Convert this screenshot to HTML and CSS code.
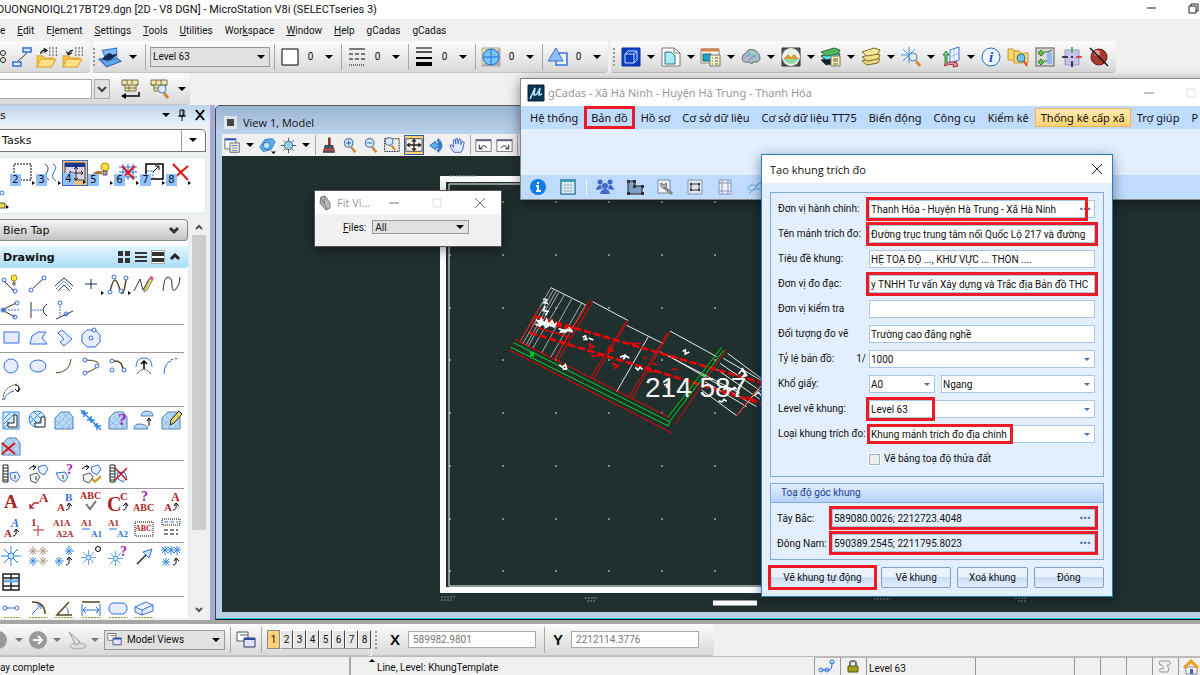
FILE: index.html
```
<!DOCTYPE html>
<html lang="vi">
<head>
  <meta charset="UTF-8" />
  <meta name="viewport" content="width=device-width, initial-scale=1" />
  <title>MicroStation V8i - gCadas</title>
  <link rel="stylesheet" href="styles.css">
</head>
<body>

  <!-- shared icons -->
  <svg class="sprite" aria-hidden="true">
    <symbol id="star" viewBox="0 0 20 20"><path d="M10 0v20M0 10h20M3 3l14 14M17 3L3 17" stroke="#2f86e0" /><circle cx="10" cy="10" r="3" fill="#cfe6ff" stroke="#2f86e0" /></symbol>
    <symbol id="lens" viewBox="0 0 20 20"><path d="M12 12l5 6" stroke="#d08a3c" stroke-width="3" /><circle cx="9" cy="7" r="5" fill="#d4ecff" stroke="#5a7fa8" stroke-width="1.5" /></symbol>
    <symbol id="folder" viewBox="0 0 20 20"><path d="M1 19V9h5l2 2h8v2" fill="#f6c64c" stroke="#e0aa30" /><path d="M1 19l3-7h14l-4 7z" fill="#ffe08a" stroke="#e0aa30" /><path d="M12 2h1m2 0h1m2 0h1M12 5h1m2 0h1m2 0h1M12 8h1m2 0h1m2 0h1" stroke="#666" stroke-width="2" /></symbol>
    <symbol id="hatch" viewBox="0 0 20 20"><path d="M1 19V8l6-6h8l4 5v12z" fill="#b7d8f7" stroke="#4e7fae" /><path d="M2 10l9 9M5 6l13 13M9 3l9 9M2 16L15 3M6 19L18 7M12 19l6-6" stroke="#8fbdec" /></symbol>
    <symbol id="views" viewBox="0 0 20 20"><path d="M1 2h11v9H1zM4 5h8" fill="#fff" stroke="#556" /><path d="M8 8h11v9H8z" fill="#dfe3ff" stroke="#335" /><path d="M8 9h11" stroke="#2c4c9c" stroke-width="2" /></symbol>
    <symbol id="chev" viewBox="0 0 12 12"><path d="M2 4l4 4 4-4" stroke="#444" stroke-width="2" /></symbol>
  </svg>

  <div class="app">
    <header class="titlebar">
      <span class="titlebar-text">DUONGNOIQL217BT29.dgn [2D - V8 DGN] - MicroStation V8i (SELECTseries 3)</span>
      <button class="win-btn" aria-label="Minimize"><svg class="ico" viewBox="0 0 20 20"><path d="M5 8h9" stroke="#222" /></svg></button>
      <button class="win-btn" aria-label="Restore"><svg class="ico" viewBox="0 0 20 20"><path d="M5 6h7v7H5zM7 6V4h7v7h-2" stroke="#222" /></svg></button>
    </header>

    <nav class="menubar">
      <a href="#">e</a>
      <a href="#"><u>E</u>dit</a>
      <a href="#">E<u>l</u>ement</a>
      <a href="#"><u>S</u>ettings</a>
      <a href="#"><u>T</u>ools</a>
      <a href="#"><u>U</u>tilities</a>
      <a href="#">Wor<u>k</u>space</a>
      <a href="#"><u>W</u>indow</a>
      <a href="#"><u>H</u>elp</a>
      <a href="#">gCadas</a>
      <a href="#">gCadas</a>
    </nav>

    <!-- attribute and primary tools -->
    <div class="toolrow">
      <div class="toolgroup file-tools">
        <svg class="ico narrow" viewBox="0 0 8 20"><circle cx="3" cy="6" r="2.5" stroke="#222" /><circle cx="3" cy="13" r="2.5" stroke="#222" /></svg>
        <svg class="ico" viewBox="0 0 20 20"><path d="M11 1h8v4h-8zM1 15h8v4H1z" fill="#e6edff" stroke="#2f6fe0" stroke-width="1.5" /><path d="M6 14l9-8" stroke="#333" /></svg>
        <svg class="ico big" viewBox="0 0 20 20"><use href="#folder" /><path d="M4 7q2-4 5-3M7 2l3 2-3 2" stroke="#000" /></svg>
        <svg class="ico big" viewBox="0 0 20 20"><use href="#folder" /><path d="M10 4q-3 0-4 3M4 5l2 3 3-2" stroke="#000" /></svg>
      </div>
      <div class="toolgroup attr-tools">
        <i class="grip"></i>
        <svg class="ico big" viewBox="0 0 20 20"><path d="M0 12l7 7 13-5-7-5z" fill="#5fa4ec" stroke="#2a66b8" /><path d="M3 4l13-2v9l-9 3z" fill="#7dbcf7" stroke="#3d7ed0" /><path d="M3 12q6-8 9-4l5-1-4 4q-5 4-10 1z" fill="#132a52" stroke="none" /></svg>
        <i class="caret"></i>
        <i class="sep"></i>
        <select class="field level" aria-label="Active level"><option>Level 63</option></select>
        <div class="attr"><svg class="ico" viewBox="0 0 20 20"><path d="M2 2h16v16H2z" fill="#fff" stroke="#000" /></svg><span>0</span><i class="caret"></i></div>
        <div class="attr"><svg class="ico" viewBox="0 0 20 20"><path d="M2 2h16" stroke="#000" /><path d="M2 7h16M2 12h16" stroke="#000" stroke-dasharray="4 2" /><path d="M2 18h16" stroke="#000" stroke-dasharray="1 1" /></svg><span>0</span><i class="caret"></i></div>
        <div class="attr"><svg class="ico" viewBox="0 0 20 20"><path d="M2 1h16" stroke="#000" /><path d="M2 5h16" stroke="#555" stroke-width="2" /><path d="M2 11h16" stroke="#000" stroke-width="2" /><path d="M2 17h16" stroke="#000" stroke-width="4" /></svg><span>0</span><i class="caret"></i></div>
        <div class="attr"><svg class="ico" viewBox="0 0 20 20"><path d="M1 1h18v18H1z" fill="#ecdf9a" stroke="#aaa" /><path d="M1 19L19 1v18z" fill="#aaa" stroke="none" /><circle cx="10" cy="10" r="8" fill="#79c3fb" stroke="#1f6fd0" /><path d="M10 2v16M2 10h16" stroke="#1f6fd0" /></svg><span>0</span><i class="caret"></i></div>
        <div class="attr"><svg class="ico" viewBox="0 0 20 20"><path d="M8 6h11v12H8z" fill="#eef3ff" stroke="#3a72d8" stroke-width="1.5" /><path d="M0 14L8 1l7 13z" fill="#8fc0f5" stroke="#3a72d8" /></svg><span>0</span><i class="caret"></i></div>
      </div>
      <div class="toolgroup main-tools">
        <i class="grip"></i>
        <div class="pair"><svg class="ico" viewBox="0 0 20 20"><path d="M1 1h18v18H1z" fill="#0a3fc4" stroke="#0a2f9c" /><path d="M4 7h9v9H4zM4 7l3-3h9v9l-3 3M13 7l3-3" stroke="#cfe0ff" /></svg><i class="caret"></i></div>
        <div class="pair"><svg class="ico" viewBox="0 0 20 20"><path d="M1 1h12l6 5v13H1z" fill="#fff" stroke="#777" /><path d="M4 5h6l4 4v8H4z" fill="#a9ecf2" stroke="#28708a" /><path d="M13 1v5h6" stroke="#777" /></svg><i class="caret"></i></div>
        <div class="pair"><svg class="ico" viewBox="0 0 20 20"><path d="M0 2h18v14H0z" fill="#f6f6ee" stroke="#888" /><path d="M0 3h18" stroke="#d8824a" stroke-width="3" /><path d="M2 7h8v7H2z" fill="#19a2d8" stroke="#1c6a4a" /><path d="M9 8h10v11H9z" fill="#fff3b0" stroke="#777" /><path d="M11 11h1m2 0h3M11 14h1m2 0h3M11 17h1m2 0h3" stroke="#2a58c8" /></svg><i class="caret"></i></div>
        <div class="pair"><svg class="ico" viewBox="0 0 20 20"><path d="M1 12q0-5 4-6 2-5 8-3 6 2 6 9-1 4-7 3l-1 2-3-2q-6 1-7-3z" fill="#a8bfc6" stroke="#65747c" /><path d="M5 12q0-5 5-5M8 13q3-5 7-4M8 6q4-1 5 3" stroke="#6d8ae0" /><circle cx="11" cy="6" r="2" fill="#9fdca4" stroke="none" /><circle cx="6" cy="12" r="2" fill="#e3a5c6" stroke="none" /></svg><i class="caret"></i></div>
        <div class="pair"><svg class="ico" viewBox="0 0 20 20"><path d="M1 1h18v18H1z" fill="#555" stroke="#333" /><circle cx="10" cy="10" r="9" fill="#e9f3ea" stroke="none" /><path d="M2 12l5-5 3 3 3-3 5 5z" fill="#d89c3a" stroke="none" /><path d="M2 12h16q-8 10-16 0z" fill="#8fd8a4" stroke="none" /></svg><i class="caret"></i></div>
        <div class="pair"><svg class="ico" viewBox="0 0 20 20"><path d="M0 13l5 5 12-2 2-4-6-3z" fill="#123" stroke="#444" /><path d="M0 9l5 4 12-2 2-4-6-2z" fill="#4fe0f0" stroke="#333" /><path d="M0 5l5 4 12-2 2-4-6-2z" fill="#55b562" stroke="#2c6e38" /><path d="M10 9h9v10h-9z" fill="#fff3b0" stroke="#777" /><path d="M12 12h5M12 14h5M12 17h5" stroke="#555" /></svg><i class="caret"></i></div>
        <div class="pair"><svg class="ico" viewBox="0 0 20 20"><path d="M1 14l5 4 11-2 2-4-6-2z" fill="#ecd884" stroke="#7d6d20" /><path d="M1 10l5 4 11-2 2-4-6-2z" fill="#f2e08e" stroke="#7d6d20" /><path d="M1 5l5 4 11-2 2-4-6-2z" fill="#fae99c" stroke="#7d6d20" /></svg><i class="caret"></i></div>
        <div class="pair"><svg class="ico" viewBox="0 0 20 20"><path d="M8 0v16M0 8h16M2 2l12 12M14 2L2 14" stroke="#3f95e8" /><path d="M15 14l4 5" stroke="#d08a3c" stroke-width="3" /><circle cx="12" cy="10" r="4" fill="#dff0ff" stroke="#5a7fa8" /></svg><i class="caret"></i></div>
        <div class="pair"><svg class="ico" viewBox="0 0 20 20"><path d="M9 3l9-3v13l-9 3z" fill="#f3f7ff" stroke="#3a72d8" /><path d="M9 10l9-4M13 2v12" stroke="#9bbcf0" /><path d="M4 17V8H2l3-4 3 4H6v7" fill="#7fd08a" stroke="#2c7a38" /><path d="M3 18q6-5 11-2l1-2 2 5-5 1 1-2q-4-2-9 1z" fill="#e79aa6" stroke="#a22a3c" /></svg><i class="caret"></i></div>
        <svg class="ico" viewBox="0 0 20 20"><circle cx="10" cy="10" r="9" fill="#eef5ff" stroke="#2467d4" /><text x="8" y="15" font-family="Liberation Serif" font-size="15" font-style="italic" font-weight="bold" fill="#1d55c4" stroke="none">i</text></svg>
        <svg class="ico" viewBox="0 0 20 20"><path d="M0 2h5l1 2h5v9H0z" fill="#fbd86a" stroke="#c8942a" /><path d="M6 4h5l1 2h8v10H6z" fill="#fbd86a" stroke="#c8942a" /><path d="M16 14l3 5" stroke="#e0442a" stroke-width="2" /><circle cx="13" cy="11" r="4" fill="#6fc3ea" stroke="#2a6f9c" /></svg>
        <svg class="ico" viewBox="0 0 20 20"><path d="M1 1h18v18H1z" fill="#d8d8d0" stroke="#888" stroke-width="1.5" /><path d="M3 6l3-3 3 3-3 3zM3 15l3-3 3 3-3 3z" fill="#5cc04a" stroke="#2d7a20" /><path d="M9 5h3l5-2M9 14h3" stroke="#555" /><path d="M12 5h5v12h-5z" fill="#8fb8ec" stroke="none" /></svg>
        <svg class="ico" viewBox="0 0 20 20"><path d="M3 3h14v15H3z" fill="#c6c2ea" stroke="#9a96c4" /><path d="M10 14v6M0 10h6M9 10h2" stroke="#111" stroke-width="1.5" /><path d="M10 0v6" stroke="#22b03a" stroke-width="1.5" /><path d="M14 10h6" stroke="#d22" stroke-width="1.5" /></svg>
        <svg class="ico" viewBox="0 0 20 20"><circle cx="10" cy="10" r="8" fill="#a83a34" stroke="#6d1d1a" /><circle cx="8" cy="6" r="3" fill="#e3a39c" stroke="none" /><path d="M1 1l18 18" stroke="#111" stroke-width="1.5" /></svg>
      </div>
    </div>

    <div class="toolrow">
      <div class="toolgroup key-in">
        <input class="keyin-box" type="text" aria-label="Key-in">
        <button class="keyin-drop" aria-label="Key-in history"><svg viewBox="0 0 12 12"><use href="#chev" /></svg></button>
        <svg class="ico" viewBox="0 0 20 20"><path d="M2 1h16v5h-2v6H5V6H2z" fill="#efe6b0" stroke="#77704a" /><path d="M2 6h16M7 1v5M12 1v5M9 6v6M5 9h11" stroke="#77704a" /><path d="M19 13v4H4" stroke="#000" stroke-width="1.5" /><path d="M6 14l-5 3 5 3z" fill="#000" stroke="none" /></svg>
        <svg class="ico" viewBox="0 0 20 20"><path d="M1 1h16v5h-2v6H4V6H1z" fill="#efe6b0" stroke="#77704a" /><path d="M1 6h16M6 1v5M11 1v5M4 9h6" stroke="#77704a" /><path d="M14 14l4 5" stroke="#d08a3c" stroke-width="3" /><circle cx="12" cy="10" r="4" fill="#d4ecff" stroke="#5a7fa8" /></svg>
        <i class="caret"></i>
      </div>
    </div>

    <main class="workspace">

      <!-- task list -->
      <aside class="tasks">
        <div class="tasks-head">
          <span class="grow">s</span>
          <i class="caret"></i>
          <svg class="pin" viewBox="0 0 10 12"><path d="M3 1h4v6H3zM6 1v6M1 7h8M5 7v5" /></svg>
          <svg class="cross" viewBox="0 0 12 12"><path d="M2 1l8 10M10 1L2 11" /></svg>
        </div>
        <div class="tasks-pick">
          <select class="tasks-select" aria-label="Task"><option>Tasks</option></select>
        </div>
        <div class="quick">
          <div class="quick-row">
            <div class="quick-cell"><svg class="ico" viewBox="0 0 20 20"><path d="M1 2h17v16H1z" stroke="#000" stroke-dasharray="2 1" /></svg><b>2</b></div>
            <div class="quick-cell"><svg class="ico" viewBox="0 0 20 20"><path d="M6 2q5 3 2 8t2 8" stroke="#444" /><path d="M14 2q5 3 1 8t2 9" stroke="#2f6fe0" /></svg><b>3</b></div>
            <div class="quick-cell active"><svg class="ico" viewBox="0 0 20 20"><path d="M0 1h20v17H0z" fill="#d8d3e8" stroke="#445" /><path d="M0 3h20" stroke="#16388c" stroke-width="4" /><path d="M11 5v13M4 11h14M9 7l2-2 2 2M9 16l2 2 2-2M6 9l-2 2 2 2M16 9l2 2-2 2" stroke="#222" /></svg><b>4</b></div>
            <div class="quick-cell"><svg class="ico" viewBox="0 0 20 20"><path d="M2 15q2-6 9-4" stroke="#b0722a" stroke-width="3" /><circle cx="14" cy="5" r="4" fill="#ffe23c" stroke="#a88c10" /><path d="M12 9h4v4h-4z" fill="#aaa" stroke="#555" /></svg><b>5</b></div>
            <div class="quick-cell"><svg class="ico" viewBox="0 0 20 20"><path d="M6 2v16M11 2v16M16 2v16M2 5h18M2 10h18M2 15h18" stroke="#2f6fe0" /><path d="M5 4l12 13M18 4L4 17" stroke="#d81818" stroke-width="2" /></svg><b>6</b></div>
            <div class="quick-cell"><svg class="ico" viewBox="0 0 20 20"><path d="M3 2h17v15H3z" stroke="#000" stroke-width="1.5" /><path d="M4 9h6v8" stroke="#2f6fe0" stroke-dasharray="2 1" /><path d="M10 10l6-6M12 4h4v4" stroke="#000" /></svg><b>7</b></div>
            <div class="quick-cell"><svg class="ico" viewBox="0 0 20 20"><path d="M4 2l15 16M19 4L4 17" stroke="#d81818" stroke-width="2" /></svg><b>8</b></div>
          </div>
          <svg class="quick-rest" viewBox="0 0 12 24"><circle cx="2" cy="7" r="2" stroke="#2f6fe0" /><path d="M0 17h5v5H0" fill="#e6d94a" stroke="#555" /><path d="M6 19l3 2-3 2z" fill="#000" /></svg>
        </div>

        <div class="tasks-body">
          <div class="palette">
            <button class="task-tab">Bien Tap <svg viewBox="0 0 12 12"><path d="M2 4l4 4 4-4" stroke="#333" stroke-width="3" /></svg></button>
            <div class="task-tab open">
              <b class="grow">Drawing</b>
              <svg viewBox="0 0 12 12"><path d="M0 0h5v5H0zM7 0h5v5H7zM0 7h5v5H0zM7 7h5v5H7z" fill="#333" /></svg>
              <svg viewBox="0 0 12 12"><path d="M0 2h12M0 6h12M0 10h12" stroke="#333" stroke-width="2" /></svg>
              <svg class="picked" viewBox="0 0 12 12"><path d="M0 1h12v4H0zM0 7h12v4H0z" fill="#333" /></svg>
              <svg viewBox="0 0 12 12"><path d="M2 8l4-4 4 4" stroke="#222" stroke-width="3" /></svg>
            </div>
            <div class="icons">
              <svg class="ico" viewBox="0 0 20 20"><path d="M3 7l10 10" stroke="#333" /><circle cx="3" cy="6" r="2" /><circle cx="14" cy="17" r="2" /><circle cx="13" cy="4" r="3" fill="#ffe23c" stroke="#a88c10" /><path d="M12 8h2v3h-2z" fill="#999" stroke="#666" /></svg>
              <svg class="ico" viewBox="0 0 20 20"><path d="M5 14L15 5" stroke="#333" /><circle cx="3" cy="16" r="2" /><circle cx="16" cy="4" r="2" /></svg>
              <svg class="ico" viewBox="0 0 20 20"><path d="M1 12l9-8 9 8M4 17l6-6 6 6" stroke="#333" /><path d="M2 15l8-8 8 8" stroke="#2f6fe0" stroke-dasharray="2 1" /></svg>
              <svg class="ico" viewBox="0 0 20 20"><path d="M10 5v10M4 10h12" stroke="#333" /><circle cx="10" cy="10" r="1" /><path d="M20 17l3 2-3 2z" fill="#000" stroke="none" /></svg>
              <svg class="ico" viewBox="0 0 20 20"><path d="M2 17Q5 6 7 6t5 10 6-10" stroke="#5a4420" stroke-width="1.5" /><circle cx="2" cy="18" r="2" fill="#fff" /><circle cx="6" cy="3" r="2" fill="#fff" /><circle cx="13" cy="17" r="2" fill="#fff" /><circle cx="18" cy="4" r="2" fill="#fff" /><path d="M20 17l3 2-3 2z" fill="#000" stroke="none" /></svg>
              <svg class="ico" viewBox="0 0 20 20"><path d="M0 17L6 5l3 11 6-11" stroke="#333" /><path d="M10 16l6-12 3 1-6 11-3 2z" fill="#f5e34a" stroke="#777" /><path d="M16 3l3 2" stroke="#d4587a" stroke-width="3" /></svg>
              <svg class="ico" viewBox="0 0 20 20"><path d="M2 17Q3 3 7 3t4 8 4 4 4-12" stroke="#333" /></svg>
              <svg class="ico" viewBox="0 0 20 20"><path d="M1 10l14-7M1 10l13 7" stroke="#333" /><path d="M1 10h18" stroke="#2f6fe0" stroke-dasharray="2 1" /><circle cx="2" cy="10" r="2" /><circle cx="16" cy="3" r="2" /><circle cx="14" cy="17" r="2" /></svg>
              <svg class="ico" viewBox="0 0 20 20"><path d="M3 2v16M19 4q-8 6 0 12" stroke="#333" /><path d="M3 10h12" stroke="#2f6fe0" stroke-dasharray="2 1" /></svg>
              <svg class="ico" viewBox="0 0 20 20"><path d="M2 19l17-8" stroke="#333" /><path d="M6 6v10" stroke="#2f6fe0" stroke-dasharray="2 1" /><circle cx="6" cy="3" r="2" /><circle cx="12" cy="14" r="2" /></svg>
            </div>
            <div class="icons">
              <svg class="ico" viewBox="0 0 20 20"><path d="M3 4h15v11H3z" fill="#e6edff" /></svg>
              <svg class="ico" viewBox="0 0 20 20"><path d="M2 16l2-8 6-4h8l-4 6 5 6z" fill="#e6edff" /></svg>
              <svg class="ico" viewBox="0 0 20 20"><path d="M4 5l4-3 10 9-8 7-4-4 4-3z" fill="#e6edff" /></svg>
              <svg class="ico" viewBox="0 0 20 20"><path d="M6 2h8l5 5v7l-5 5H6l-5-5V7z" fill="#e6edff" /><circle cx="10" cy="10" r="2" /><circle cx="13" cy="2" r="2" fill="#fff" /></svg>
            </div>
            <div class="icons">
              <svg class="ico" viewBox="0 0 20 20"><circle cx="10" cy="10" r="7" fill="#e6edff" /></svg>
              <svg class="ico" viewBox="0 0 20 20"><ellipse cx="10" cy="10" rx="8" ry="6" fill="#e6edff" /></svg>
              <svg class="ico" viewBox="0 0 20 20"><path d="M2 17Q16 16 17 3" stroke="#5a4420" /></svg>
              <svg class="ico" viewBox="0 0 20 20"><path d="M4 4q18 0 12 7-4 4-12 6" stroke="#5a4420" /><circle cx="4" cy="4" r="2" fill="#fff" /><circle cx="16" cy="10" r="2" fill="#fff" /><circle cx="4" cy="17" r="2" fill="#fff" /></svg>
              <svg class="ico" viewBox="0 0 20 20"><path d="M5 5q9-1 10 8" stroke="#5a4420" stroke-width="1.5" /><circle cx="4" cy="5" r="2" fill="#fff" /><circle cx="16" cy="14" r="2" fill="#fff" /><circle cx="4" cy="14" r="2" fill="#fff" /></svg>
              <svg class="ico" viewBox="0 0 20 20"><path d="M2 11q0-9 8-9t8 9" /><path d="M3 18q7-9 14 0" stroke="#333" stroke-dasharray="2 1" /><path d="M10 13V5M7 8l3-3 3 3" stroke="#000" stroke-width="1.5" /></svg>
              <svg class="ico" viewBox="0 0 20 20"><path d="M3 18Q4 6 10 5" /><path d="M10 4q4-2 8-1" stroke="#333" stroke-dasharray="2 2" /></svg>
              <svg class="ico" viewBox="0 0 20 20"><path d="M2 18Q2 5 16 2" stroke="#333" stroke-dasharray="2 1" /><path d="M3 18Q5 11 13 9" /><path d="M14 3q6 0 3 6M14 7l3 3 2-4" stroke="#000" /></svg>
            </div>
            <div class="icons">
              <svg class="ico" viewBox="0 0 20 20"><path d="M2 2h16v17H2z" fill="#d3ebff" stroke="#2f86e0" /><path d="M3 9l6-6M3 14L14 3M3 18l4-4" stroke="#2f86e0" /><path d="M7 12v5h9V5h-3v8H7z" fill="#fff" stroke="#222" /></svg>
              <svg class="ico" viewBox="0 0 20 20"><circle cx="9" cy="9" r="8" fill="#d3ebff" stroke="#2f86e0" /><path d="M2 6l11 11M6 2l11 11M13 2L2 13M17 6L6 17" stroke="#2f86e0" /><path d="M7 13v4h10V7h-4v6z" fill="#fff" stroke="#222" /></svg>
              <svg class="ico"><use href="#hatch" /></svg>
              <svg class="ico" viewBox="0 0 20 20"><path d="M3 0v7M0 3h7M1 1l5 5M10 6v7M6 10h8M7 7l6 6M16 13v7M13 16h7M13 13l6 6M0 0l20 20" stroke="#2f86e0" stroke-width="1.5" /></svg>
              <svg class="ico" viewBox="0 0 20 20"><use href="#hatch" /><text x="10" y="15" class="qm large">?</text></svg>
              <svg class="ico" viewBox="0 0 20 20"><path d="M7 6q0-4 5-5 7 0 7 5zM0 19q0-5 5-5 8 0 9 5z" fill="#b7d8f7" stroke="#4e7fae" /><path d="M15 16V9M13 11l2-3 2 3" stroke="#000" /></svg>
              <svg class="ico" viewBox="0 0 20 20"><use href="#hatch" /><path d="M9 15l1-5 8-9 3 3-8 9z" fill="#e8d862" stroke="#222" /></svg>
              <svg class="ico" viewBox="0 0 20 20"><use href="#hatch" /><path d="M1 7l13 11M14 7L1 18" stroke="#d81818" stroke-width="2" /></svg>
            </div>
            <div class="icons">
              <svg class="ico" viewBox="0 0 20 20"><path d="M2 1h5v17H2zM2 4h5M2 7h5M2 10h5M2 13h5M2 16h5" stroke="#222" /><path d="M9 9l7-1 3 5-4 5-5-3z" fill="#eaf4ff" /><path d="M14 11v4" stroke="#333" /></svg>
              <svg class="ico" viewBox="0 0 20 20"><path d="M1 5q3-4 6-2M5 1l3 2-3 3" stroke="#000" /><path d="M2 11l7-2 3 4-4 6-5-2z" fill="#f3f3f3" stroke="#555" /><path d="M10 3l7-2 3 4-4 6-5-3z" fill="#eaf4ff" /><path d="M8 12v4" stroke="#333" /></svg>
              <svg class="ico" viewBox="0 0 20 20"><path d="M2 9l9-1 3 5-4 5-5-3z" fill="#eaf4ff" /><path d="M9 11v4" stroke="#333" /><text x="12" y="10" class="qm">?</text></svg>
              <svg class="ico" viewBox="0 0 20 20"><path d="M8 11l6 5 6-5v3l-6 5-6-5z" fill="#e0922c" stroke="none" /><path d="M1 5q3-4 6-2M5 1l3 2-3 3" stroke="#000" /><path d="M2 11l7-2 3 4-4 6-5-2z" fill="#f3f3f3" stroke="#555" /><path d="M10 3l7-2 3 4-4 6-5-3z" fill="#eaf4ff" /></svg>
              <svg class="ico" viewBox="0 0 20 20"><path d="M2 1h5v17H2zM2 4h5M2 7h5M2 10h5M2 13h5M2 16h5" stroke="#222" /><path d="M9 9l7-1 3 5-4 5-5-3z" fill="#eaf4ff" /><path d="M7 4l12 12M19 4L7 16" stroke="#c01818" stroke-width="1.5" /></svg>
            </div>
            <div class="icons">
              <svg class="ico" viewBox="0 0 20 20"><text x="3" y="16" class="abc" font-size="19">A</text></svg>
              <svg class="ico" viewBox="0 0 20 20"><text x="11" y="10" class="abc" font-size="13">A</text><path d="M2 16l4-5h5M2 12v4h4" stroke="#b03030" stroke-width="1.5" /></svg>
              <svg class="ico" viewBox="0 0 20 20"><text x="3" y="19" class="abc" font-size="11">A</text><text x="11" y="9" class="abc blue" font-size="11">B</text><path d="M12 18q4 0 3-6M13 14l2-3 3 3" stroke="#000" /></svg>
              <svg class="ico" viewBox="0 0 20 20"><text x="-1" y="7" class="abc" font-size="10">ABC</text><path d="M5 12l4 5 6-8" stroke="#777" stroke-width="2" /></svg>
              <svg class="ico" viewBox="0 0 20 20"><text x="-1" y="19" class="abc" font-size="20">C</text><text x="12" y="8" class="abc" font-size="11">C</text><path d="M15 18q4 0 3-6M15 14l3-3 2 3" stroke="#000" /></svg>
              <svg class="ico" viewBox="0 0 20 20"><text x="-1" y="19" class="abc" font-size="10">ABC</text><text x="7" y="9" class="qm">?</text></svg>
              <svg class="ico" viewBox="0 0 20 20"><text x="3" y="19" class="abc" font-size="11">A</text><text x="10" y="9" class="abc" font-size="12">A</text><path d="M12 18q4 0 3-6M13 14l2-3 3 3" stroke="#000" /></svg>
              <svg class="ico" viewBox="0 0 20 20"><text x="3" y="19" class="abc" font-size="11">A</text><text x="10" y="9" class="abc blue" font-size="12" font-style="italic">A</text><path d="M12 18q4 0 3-6M13 14l2-3 3 3" stroke="#000" /></svg>
              <svg class="ico" viewBox="0 0 20 20"><text x="3" y="8" class="abc" font-size="11">1</text><path d="M10 7v11M5 12h11" stroke="#b03030" /></svg>
              <svg class="ico" viewBox="0 0 20 20"><text x="-1" y="8" class="abc" font-size="9">A1A</text><text x="2" y="19" class="abc" font-size="9">A2A</text></svg>
              <svg class="ico" viewBox="0 0 20 20"><text x="0" y="8" class="abc" font-size="9">A1</text><text x="10" y="19" class="abc blue" font-size="9">A1</text><path d="M1 11h8" /></svg>
              <svg class="ico" viewBox="0 0 20 20"><text x="0" y="8" class="abc" font-size="9">A1</text><text x="9" y="19" class="abc blue" font-size="9">A2</text><path d="M1 11h8" /></svg>
              <svg class="ico" viewBox="0 0 20 20"><path d="M1 4h18v14H1z" stroke="#000" stroke-dasharray="1 1" /><text x="1" y="13" class="abc" font-size="8">ABC</text></svg>
              <svg class="ico" viewBox="0 0 20 20"><path d="M1 1h18v6H1z" stroke="#000" stroke-dasharray="1 1" /><path d="M3 4h14" stroke-dasharray="4 2" /><path d="M3 12h14M3 16h14" stroke="#000" stroke-dasharray="4 2" /></svg>
            </div>
            <div class="icons">
              <svg class="ico"><use href="#star" /></svg>
              <svg class="ico" viewBox="0 0 20 20"><path d="M5 0v9M1 5h9M2 2l6 6M8 2L2 8M15 0v9M11 5h9M12 2l6 6M18 2l-6 6M15 11v9M11 15h9M12 12l6 6M18 12l-6 6" stroke="#a89c88" /><path d="M5 11v9M1 15h9M2 12l6 6M8 12l-6 6" stroke="#2f86e0" /></svg>
              <svg class="ico" viewBox="0 0 20 20"><path d="M15 0v9M11 5h9M12 2l6 6M18 2l-6 6M5 11v9M1 15h9M2 12l6 6M8 12l-6 6" stroke="#2f86e0" /><path d="M12 19q4 0 3-7M13 14l2-3 3 3" stroke="#000" /></svg>
              <svg class="ico" viewBox="0 0 20 20"><use href="#star" y="4" width="15" height="15" /><circle cx="17" cy="3" r="2.5" stroke="#000" /></svg>
              <svg class="ico" viewBox="0 0 20 20"><use href="#star" y="5" width="15" height="15" /><text x="12" y="10" class="qm">?</text></svg>
              <svg class="ico" viewBox="0 0 20 20"><path d="M3 18L13 8" stroke="#222" stroke-width="1.5" /><path d="M9 6l9-3-3 9z" fill="#cfe6ff" /></svg>
              <svg class="ico" viewBox="0 0 20 20"><path d="M4 0v9M0 4h20M1 1l6 6M7 1L1 7M10 0v9M7 1l6 6M13 1L7 7M16 0v9M13 1l6 6M19 1l-6 6M5 12v8M1 16h8M2 13l6 6M8 13l-6 6" stroke="#2f86e0" /><path d="M12 19q4 0 3-6M13 15l2-3 3 3" stroke="#000" /></svg>
              <svg class="ico" viewBox="0 0 20 20"><path d="M2 2h16v16H2zM2 6h16M2 14h16M10 2v16" stroke="#222" stroke-width="1.5" /><path d="M3 9h14" stroke="#6fb0f0" stroke-width="3" /></svg>
            </div>
            <div class="icons last">
              <svg class="ico" viewBox="0 0 20 20"><path d="M5 8h9" /><circle cx="4" cy="8" r="2" /><circle cx="16" cy="8" r="2" /><path d="M3 18h16" class="ruler" /></svg>
              <svg class="ico" viewBox="0 0 20 20"><path d="M4 2q13 0 13 12" stroke="#5a4420" stroke-width="1.5" /><path d="M4 14L13 5M9 5h4v4" /><path d="M1 18h19" class="ruler" /></svg>
              <svg class="ico" viewBox="0 0 20 20"><path d="M15 2L3 15h15" stroke="#5a4420" stroke-width="1.5" /><path d="M11 6q4 3 3 9" /><path d="M1 18h19" class="ruler" /></svg>
              <svg class="ico" viewBox="0 0 20 20"><path d="M1 2h18" stroke="#5a4420" stroke-width="1.5" /><path d="M1 4v12M19 4v12M2 10h16M5 7l-3 3 3 3M15 7l3 3-3 3" /><path d="M1 18h19" class="ruler" /></svg>
              <svg class="ico" viewBox="0 0 20 20"><rect x="1" y="3" width="18" height="11" rx="5" fill="#e6edff" /><path d="M1 18h19" class="ruler" /></svg>
              <svg class="ico" viewBox="0 0 20 20"><path d="M1 7l11-5 7 3v6L8 15l-7-3zM1 7l7 3 11-5M8 10v5" fill="#e6edff" /><path d="M1 18h19" class="ruler" /></svg>
            </div>
          </div>
          <div class="scrollbar">
            <svg viewBox="0 0 12 12"><path d="M3 8l3-3 3 3" stroke="#555" stroke-width="2" /></svg>
            <i class="thumb"></i>
            <svg viewBox="0 0 12 12"><path d="M3 4l3 3 3-3" stroke="#555" stroke-width="2" /></svg>
          </div>
        </div>
      </aside>

      <!-- drawing view -->
      <section class="view">
        <div class="view-title"><i class="view-icon"></i>View 1, Model</div>
        <div class="view-tools">
          <svg class="ico" viewBox="0 0 20 20"><path d="M1 2h13v12H1z" fill="#fff" stroke="#557" /><path d="M1 3h13" stroke="#2c5cb8" stroke-width="2" /><path d="M7 7h11v11H7z" fill="#fff3d0" stroke="#557" /><path d="M9 10h7M9 13h7M9 16h7" stroke="#3a72d8" /></svg>
          <i class="caret"></i>
          <svg class="ico" viewBox="0 0 20 20"><path d="M1 12l6-9 9-1 3 4-5 9-9 2z" fill="#58b0ee" stroke="#2568b0" /><circle cx="9" cy="10" r="4" fill="#b5e0ff" stroke="#2568b0" /><path d="M14 17h6l-3 3z" fill="#000" stroke="none" /></svg>
          <svg class="ico" viewBox="0 0 20 20"><path d="M10 1v18M1 10h18M4 4l12 12M16 4L4 16" stroke="#444" /><circle cx="10" cy="10" r="5" fill="#8fd3e8" stroke="#456" /></svg>
          <i class="caret"></i>
          <i class="sep"></i>
          <svg class="ico" viewBox="0 0 20 20"><path d="M10 1h2v9h-2z" fill="#b0403a" stroke="#7a2a26" /><path d="M6 10h9l2 8H4z" fill="#556" stroke="#333" /><path d="M4 15h13" stroke="#c44" stroke-width="2" /></svg>
          <svg class="ico" viewBox="0 0 20 20"><use href="#lens" /><path d="M6 7h6M9 4v6" stroke="#124a9c" /></svg>
          <svg class="ico" viewBox="0 0 20 20"><use href="#lens" /><path d="M6 7h6" stroke="#124a9c" /></svg>
          <svg class="ico" viewBox="0 0 20 20"><path d="M2 2h17v15H2z" stroke="#000" stroke-dasharray="2 1" /><use href="#lens" x="-1" y="-1" width="18" height="18" /></svg>
          <svg class="ico lit" viewBox="0 0 20 20"><path d="M1 3h18v14H1z" fill="#f3efe6" stroke="#445" /><path d="M10 3v14M2 10h16M8 6l2-2 2 2M8 14l2 2 2-2M5 8l-2 2 2 2M15 8l2 2-2 2" stroke="#222" stroke-width="1.5" /></svg>
          <svg class="ico" viewBox="0 0 20 20"><path d="M12 2q9 8 0 16l-1-3q6-5 0-10z" fill="#3c86dd" stroke="#1c5cb0" /><path d="M9 5L2 10l7 5v-3h4V8H9z" fill="#69aef0" stroke="#1c5cb0" /></svg>
          <svg class="ico" viewBox="0 0 20 20"><path d="M6 18q-4-4-5-8l2-1 2 3V4l2-1 1 5V2h2l1 6 1-6 2 1v6l2-4 2 1-2 9-2 3z" fill="#dbe8ff" stroke="#2a52b8" /></svg>
          <i class="sep"></i>
          <svg class="ico" viewBox="0 0 20 20"><path d="M1 3h18v14H1z" fill="#fff" stroke="#667" /><path d="M1 4h18" stroke="#667" stroke-width="2" /><path d="M14 13q-4-6-8 1M5 9v5h4" stroke="#000" /></svg>
          <svg class="ico" viewBox="0 0 20 20"><path d="M1 3h18v14H1z" fill="#fff" stroke="#667" /><path d="M1 4h18" stroke="#667" stroke-width="2" /><path d="M6 13q4-6 8 1M15 9v5h-4" stroke="#000" /></svg>
          <i class="sep"></i>
        </div>
        <div class="canvas">
          <svg class="plan" aria-label="Cadastral plan">
            <g transform="translate(-222 -156)">
              <!-- sheet frame -->
              <g stroke="#fff" fill="none">
                <path d="M443 593V179h657M440 590h660" stroke-width="6" />
                <path d="M449 586V184h651M449 586h651" />
                <path d="M713 603h44" stroke-width="5" />
              </g>
              <path d="M449 202h600M449 255h600M449 308h600M449 360h600M449 413h600M449 466h600M449 519h600M449 571h600" stroke="#dfe6e4" stroke-dasharray="2 51" />
              <path d="M450 176h26M441 597h14M441 600h12M585 598h13M587 601h9M874 599h16M1015 598h12M1018 601h9" stroke="#8a9694" stroke-dasharray="2 1" />

              <g transform="translate(430 250) scale(.3333)" fill="none" stroke-width="3">
                <g stroke="#e8eceb">
                  <path d="M363 113l104 52M488 155l107 57M590 226l110 55M720 243l140 77M893 310l107 80" />
                  <path d="M363 113l-93 162M370 120l-92 162M378 124l-90 162M386 128l-92 162M403 135l-95 160M425 147l-90 162M455 160l-93 162M467 165l-92 162" stroke-width="2" />
                  <path d="M655 260l-95 165M690 305l240 125M720 320l260 150M880 325l120 70M870 340l125 85M860 358l130 90M815 420l105 77M825 395l125 75M1000 400l-80 97" />
                </g>
                <g stroke="#f00000">
                  <path d="M255 268l465 235M238 300l490 250M735 523l153-223M480 148L372 330M467 170l-92 155M488 155L388 325v10M595 210L490 388M586 218L484 380M720 243L605 447M712 250L598 440M995 400l-75 97M330 170l-60 105M318 195l-18 50" />
                  <path d="M318 200l682 200M300 248l700 214M345 215l85 25" stroke-width="8" stroke-dasharray="22 8" />
                  <path d="M320 232l100 30M480 280l12 10-14 4zM482 318h30M538 290l12 12-14 4zM550 340l16 8-10 8zM600 280h34M640 320l10 8M725 358h18M655 365h24M668 340l14 5M890 420l20 10M950 440l30 12" stroke-width="4" />
                </g>
                <g stroke="#00d818">
                  <path d="M250 278l468 237M243 292l472 236 7-20M715 500l160-208M722 510l160-210" />
                  <path d="M300 306l12 14M312 306l-12 14" stroke-width="5" />
                </g>
                <!-- parcel numbers -->
                <g stroke="#fff" stroke-width="5">
                  <path d="M340 146l10 4-8 8 12 2M346 168l-6 14 14 2-8 12M318 208l10 12 6-14 8 18 8-16 6 18 10-14 8 16 6-10M316 222l14 6 8-8 10 12 12-8 14 8M386 236l12 4-6 6h16l4-8 16 8-12-14M458 262l8-4 4 10h-10M476 264l14 6M570 322l14-6-4 12 8-10 10 6M616 352l8 8 6-8 8 6M758 304l8-4v12l12-6M388 344l10 8 8-8 4 12-12 2M926 372l10-12 10 10-8 10 14-4M866 452l10 4 6-8 8 6M880 420l12-10 8 12 14-10 6 6M702 405l14-4-6 10 10 2M975 436l10-10 10 12" />
                  <path d="M322 212l54 14M324 220l48 8M392 240l34 2M936 354l14 24M884 414l30 4" stroke-width="6" />
                </g>
              </g>
              <text x="645" y="397" class="area-label">214 587</text>
            </g>
          </svg>
        </div>
      </section>

      <!-- Fit View tool settings -->
      <section class="window fit">
        <div class="fit-title">
          <svg class="ico" viewBox="0 0 20 20"><path d="M6 4l4-1 5 7v5l-4 2-6-7z" fill="#bbb" stroke="#777" /><path d="M6 4l2 6M10 3l-1 7M9 10l3 6" stroke="#777" /></svg>
          <span class="grow">Fit Vi...</span>
          <svg class="ico" viewBox="0 0 20 20"><path d="M5 10h10" stroke="#777" /></svg>
          <svg class="ico" viewBox="0 0 20 20"><path d="M6 6h8v8H6z" stroke="#ddd" /></svg>
          <svg class="ico" viewBox="0 0 20 20"><path d="M5 5l10 10M15 5L5 15" stroke="#777" /></svg>
        </div>
        <div class="fit-body">
          <label for="fitFiles"><u>F</u>iles:</label>
          <select class="field" id="fitFiles"><option>All</option></select>
        </div>
      </section>
    </main>

    <!-- view groups and coordinates -->
    <div class="toolrow bottom">
      <div class="toolgroup view-groups">
        <svg class="ico half" viewBox="10 0 10 20"><circle cx="8" cy="10" r="9" fill="#999" stroke="none" /></svg>
        <i class="caret dim"></i>
        <svg class="ico" viewBox="0 0 20 20"><circle cx="10" cy="10" r="9" fill="#999" stroke="none" /><path d="M5 10h9M10 6l4 4-4 4" stroke="#fff" stroke-width="2" /></svg>
        <i class="caret dim"></i>
        <svg class="ico" viewBox="0 0 20 20"><ellipse cx="12" cy="16" rx="8" ry="3" fill="#ddd" stroke="#aaa" /><path d="M3 2l7 13 4-3z" fill="#e4e4e4" stroke="#999" /></svg>
        <i class="caret dim"></i>
        <div class="model-views">
          <svg class="ico" viewBox="0 0 20 20"><use href="#views" /></svg>
          <select class="field" aria-label="View group"><option>Model Views</option></select>
        </div>
        <i class="sep"></i>
        <svg class="ico" viewBox="0 0 20 20"><use href="#views" /></svg>
        <i class="sep"></i>
        <div class="numbers">
          <button class="on">1</button><button>2</button><button>3</button><button>4</button><button>5</button><button>6</button><button>7</button><button>8</button>
        </div>
      </div>
      <div class="toolgroup coords">
        <i class="grip"></i>
        <label for="coordX">X</label>
        <input id="coordX" type="text" value="589982.9801">
        <i class="sep"></i>
        <label for="coordY">Y</label>
        <input id="coordY" type="text" value="2212114.3776">
      </div>
    </div>

    <footer class="status">
      <div class="status-prompt">ay complete</div>
      <div class="status-msg"><i class="up"></i>Line, Level: KhungTemplate</div>
      <div class="cell"><svg class="ico" viewBox="0 0 20 20"><path d="M4 12h8q3 0 3-8" /><circle cx="4" cy="12" r="2" /><circle cx="10" cy="12" r="2" /><circle cx="15" cy="4" r="2" /></svg></div>
      <div class="cell"><svg class="ico" viewBox="0 0 20 20"><path d="M7 8V5q0-2 3-2t3 2v3" stroke="#777" stroke-width="2" /><path d="M5 8h10v6H5z" fill="#a8a020" stroke="#5c5810" /></svg></div>
      <div class="cell level-cell">Level 63</div>
      <div class="cell wide"></div>
      <div class="cell"></div>
      <div class="cell"></div>
      <div class="cell"></div>
      <div class="cell"><svg class="ico" viewBox="0 0 20 20"><path d="M5 3h9q3 2 0 4h-2q3 3 1 7H6q-3-1-1-3h3q1-2-1-4H5q-2-2 0-4z" stroke="#999" /></svg></div>
      <div class="cell"><svg class="ico" viewBox="0 0 20 20"><path d="M5 9h11v7H5z" fill="#f2f2f8" stroke="#889" /><path d="M3 10l7-7 7 7" stroke="#f09a20" stroke-width="3" /><path d="M9 11h3v5H9z" fill="#4d5db0" stroke="none" /></svg></div>
    </footer>

    <!-- gCadas window -->
    <section class="window gcadas">
      <div class="gcadas-title">
        <svg class="ico" viewBox="0 0 20 20"><path d="M2 2h16v16H2z" fill="#0b3554" stroke="#0b2238" /><path d="M4 16L9 5l-1 7q3 1 6-7l-1 7 3-1" stroke="#b9e6ff" stroke-width="1.5" /></svg>
        <span class="grow">gCadas - Xã Hà Ninh - Huyện Hà Trung - Thanh Hóa</span>
        <svg class="ico" viewBox="0 0 20 20"><path d="M5 10h10" stroke="#888" /></svg>
        <svg class="ico" viewBox="0 0 20 20"><path d="M6 6h8v8H6z" stroke="#ddd" /></svg>
      </div>
      <nav class="gcadas-menu">
        <a href="#">Hệ thống</a>
        <a href="#" class="marked">Bản đồ</a>
        <a href="#">Hồ sơ</a>
        <a href="#">Cơ sở dữ liệu</a>
        <a href="#">Cơ sở dữ liệu TT75</a>
        <a href="#">Biến động</a>
        <a href="#">Công cụ</a>
        <a href="#">Kiểm kê</a>
        <a href="#" class="hot">Thống kê cấp xã</a>
        <a href="#">Trợ giúp</a>
        <a href="#">P</a>
      </nav>
      <div class="gcadas-body"></div>
      <div class="gcadas-tools">
        <svg class="ico" viewBox="0 0 20 20"><circle cx="10" cy="10" r="8" fill="#0d7be8" stroke="none" /><path d="M10 5v2M8 9h2v5M8 14h5" stroke="#fff" stroke-width="2" /></svg>
        <svg class="ico" viewBox="0 0 20 20"><path d="M3 3h14v14H3z" fill="#fff" stroke="#2a7f9c" stroke-width="1.5" /><path d="M3 4h14" stroke="#3fa0bc" stroke-width="2" /><path d="M3 8h14M3 11h14M3 14h14M7 5v12M10 5v12M13 5v12" stroke="#9bc" /></svg>
        <i class="sep"></i>
        <svg class="ico" viewBox="0 0 20 20"><g fill="#3f68c8" stroke="none"><circle cx="5" cy="5" r="2.5" /><circle cx="15" cy="5" r="2.5" /><circle cx="10" cy="9" r="3" /><path d="M1 13q1-5 5-5l1 4zM19 13q-1-5-5-5l-1 4zM5 17q1-5 5-5t5 5z" /></g></svg>
        <svg class="ico" viewBox="0 0 20 20"><path d="M3 4h7v5h7v8H3z" fill="#7f9fc4" stroke="#222" /><path d="M2 3h3v3H2zM8 3h3v3H8zM8 8h3v3H8zM16 8h3v3h-3zM2 15h3v3H2zM16 15h3v3h-3z" fill="#333" stroke="none" /></svg>
        <svg class="ico" viewBox="0 0 20 20"><path d="M3 3h12v13H3z" fill="#eef3fb" stroke="#7b8aa4" /><path d="M9 10l8 7" stroke="#888" stroke-width="3" /><path d="M6 6q-1 5 3 5 4-1 2-5l-2 2z" fill="#bbb" stroke="#666" /></svg>
        <svg class="ico" viewBox="0 0 20 20"><path d="M3 3h14v14H3z" fill="#dfe6f0" stroke="#8794aa" /><path d="M6 7h8v6H6z" stroke="#333" /><path d="M5 6h2v2H5zM13 6h2v2h-2zM5 12h2v2H5zM13 12h2v2h-2z" fill="#333" stroke="none" /></svg>
        <svg class="ico" viewBox="0 0 20 20"><path d="M4 3h12v14H4zM7 3v14M13 3v14M4 6h12M4 14h12" fill="#eef3fb" stroke="#8a93b8" /></svg>
        <svg class="ico" viewBox="0 0 20 20"><path d="M4 13q-3-3 2-5h4q3 3-1 5zM10 9q4-4 7-2t-2 5h-4M4 17L17 4" stroke="#5fb0dc" /></svg>
      </div>
    </section>

    <!-- frame dialog -->
    <section class="window dialog">
      <div class="dialog-title">
        <span class="grow">Tạo khung trích đo</span>
        <button class="win-btn" aria-label="Close"><svg class="ico" viewBox="0 0 20 20"><path d="M5 5l10 10M15 5L5 15" stroke="#222" /></svg></button>
      </div>
      <form class="dialog-body">
        <div class="fields">
          <label for="unit">Đơn vị hành chính:</label>
          <div class="control"><input id="unit" type="text" value="Thanh Hóa - Huyện Hà Trung - Xã Hà Ninh"><i class="dots">···</i><i class="mark short"></i></div>
          <label for="sheet">Tên mảnh trích đo:</label>
          <div class="control"><input id="sheet" type="text" value="Đường trục trung tâm nối Quốc Lộ 217 và đường"><i class="mark"></i></div>
          <label for="heading">Tiêu đề khung:</label>
          <div class="control"><input id="heading" type="text" value="HỆ TOẠ ĐỘ ..., KHƯ VỰC ... THÔN ...."></div>
          <label for="survey">Đơn vị đo đạc:</label>
          <div class="control"><input id="survey" type="text" value="y TNHH Tư vấn Xây dựng và Trắc địa Bản đồ THC"><i class="mark"></i></div>
          <label for="check">Đơn vị kiểm tra</label>
          <div class="control"><input id="check" type="text"></div>
          <label for="subject">Đối tượng đo vẽ</label>
          <div class="control"><input id="subject" type="text" value="Trường cao đẳng nghề"></div>
          <label for="scale" class="split"><span>Tỷ lệ bản đồ:</span><span>1/</span></label>
          <div class="control"><select id="scale"><option>1000</option></select></div>
          <label for="paper">Khổ giấy:</label>
          <div class="control two"><select id="paper"><option>A0</option></select><select aria-label="Hướng giấy"><option>Ngang</option></select></div>
          <label for="level">Level vẽ khung:</label>
          <div class="control"><select id="level"><option>Level 63</option></select><i class="mark level-mark"></i></div>
          <label for="kind">Loại khung trích đo:</label>
          <div class="control"><select id="kind"><option>Khung mảnh trích đo địa chính</option></select><i class="mark kind-mark"></i></div>
          <label class="tick"><input type="checkbox">Vẽ bảng toạ độ thửa đất</label>
        </div>
        <div class="corners">
          <h2>Toạ độ góc khung</h2>
          <div class="corner">
            <label for="nw">Tây Bắc:</label>
            <div class="control"><input id="nw" type="text" value="589080.0026; 2212723.4048"><i class="dots">···</i><i class="mark"></i></div>
          </div>
          <div class="corner">
            <label for="se">Đông Nam:</label>
            <div class="control"><input id="se" type="text" value="590389.2545; 2211795.8023"><i class="dots">···</i><i class="mark"></i></div>
          </div>
        </div>
        <div class="actions">
          <div class="control"><button type="button">Vẽ khung tự động</button><i class="mark tight"></i></div>
          <button type="button">Vẽ khung</button>
          <button type="button">Xoá khung</button>
          <button type="button">Đóng</button>
        </div>
      </form>
    </section>
  </div>

</body>
</html>
```
FILE: styles.css
```
* {
  box-sizing: border-box;
}

body {
  margin: 0;
  font-family: "Roboto", sans-serif;
  font-size: 10px;
  color: #111;
  background: #f0f0f0;
}

button, input, select {
  font: inherit;
  color: inherit;
  margin: 0;
}

a {
  color: inherit;
  text-decoration: none;
}

.app {
  position: relative;
  display: flex;
  flex-direction: column;
  height: 100vh;
  overflow: hidden;
}

.grow {
  flex: 1;
}

/* icons */
.sprite {
  display: none;
}

.ico {
  width: 20px;
  height: 20px;
  flex: none;
  fill: none;
  stroke: #2f6fe0;
  overflow: visible;
}

.ico.big {
  width: 22px;
  height: 22px;
}

.ico.narrow {
  width: 8px;
}

.ico.half {
  width: 10px;
  overflow: hidden;
}

.abc {
  font-family: "Liberation Serif", serif;
  font-weight: bold;
  fill: #b02525;
  stroke: none;
}

.abc.blue {
  fill: #2f6fe0;
}

.qm {
  font-family: "Liberation Serif", serif;
  font-weight: bold;
  font-size: 14px;
  fill: #a818b8;
  stroke: none;
}

.qm.large {
  font-size: 17px;
}

.ruler {
  stroke: #a89a20;
  stroke-width: 2;
  stroke-dasharray: 2 1;
}

.caret {
  flex: none;
  border: 4px solid transparent;
  border-top-color: #000;
  border-bottom: 0;
}

.caret.dim {
  border-top-color: #777;
}

.sep {
  flex: none;
  width: 1px;
  height: 26px;
  background: #a8a8a8;
}

.grip {
  flex: none;
  width: 2px;
  height: 18px;
  background: repeating-linear-gradient(#999 0 2px, transparent 2px 4px);
}

.win-btn {
  padding: 0;
  border: 0;
  background: none;
  display: flex;
}

/* title and menu */
.titlebar {
  display: flex;
  align-items: center;
  flex: none;
  height: 19px;
  background: #fff;
  font-size: 11px;
  gap: 22px;
}

.titlebar-text {
  flex: 1;
  margin-left: -3px;
  white-space: nowrap;
  line-height: 16px;
}

.titlebar .win-btn:last-child {
  margin-right: -4px;
}

.menubar {
  display: flex;
  align-items: center;
  flex: none;
  gap: 12px;
  height: 22px;
}

/* toolbars */
.toolrow {
  display: flex;
  flex: none;
  gap: 3px;
  height: 32px;
}

.toolgroup {
  display: flex;
  align-items: center;
  background: linear-gradient(#fcfcfc, #d9d9d9);
  border-bottom: 1px solid #c4c4c4;
  border-radius: 0 4px 4px 0;
}

.file-tools {
  gap: 4px;
  width: 90px;
}

.attr-tools {
  gap: 4px;
  width: 515px;
}

.attr-tools .caret {
  margin: 0 4px;
}

.field {
  appearance: none;
  height: 20px;
  padding: 0 16px 0 2px;
  border: 1px solid #999;
  border-radius: 0;
  background: #e1e1e1 url("data:image/svg+xml,%3Csvg xmlns='http://www.w3.org/2000/svg' width='8' height='4'%3E%3Cpath d='M0 0h8L4 4z'/%3E%3C/svg%3E") no-repeat right 4px center;
}

.level {
  width: 120px;
}

.attr {
  display: flex;
  align-items: center;
  width: 63px;
  height: 26px;
  padding-left: 5px;
  border-left: 1px solid #a8a8a8;
}

.attr span {
  width: 24px;
  text-align: center;
}

.main-tools {
  gap: 5px;
  padding: 0 6px 0 2px;
}

.main-tools .ico {
  width: 22px;
}

.pair {
  display: flex;
  align-items: center;
  gap: 5px;
}

.key-in {
  width: 190px;
  gap: 2px;
}

.keyin-box {
  width: 92px;
  height: 20px;
  border: 1px solid #aaa;
  border-left: 0;
  background: #fff;
}

.keyin-drop {
  width: 16px;
  height: 20px;
  padding: 0 1px;
  border: 1px solid #aaa;
  background: #e1e1e1;
}

.keyin-drop svg {
  width: 12px;
  height: 12px;
  fill: none;
  display: block;
}

.key-in .ico {
  margin-left: 8px;
}

.key-in .caret {
  margin-left: 6px;
}

/* workspace */
.workspace {
  position: relative;
  display: flex;
  flex: 1;
  min-height: 0;
  border-bottom: 4px solid #a6a6a6;
}

.tasks {
  display: flex;
  flex-direction: column;
  flex: none;
  width: 215px;
  padding-right: 4px;
  border-right: 5px solid #a9a9d8;
  font-family: "DejaVu Sans", sans-serif;
  font-size: 11px;
}

.tasks-head {
  display: flex;
  align-items: center;
  flex: none;
  gap: 7px;
  height: 20px;
  margin-right: -4px;
  padding-right: 4px;
  background: linear-gradient(#bcd3ea, #e9f2fb);
}

.pin {
  width: 10px;
  height: 12px;
  fill: none;
  stroke: #000;
}

.cross {
  width: 12px;
  height: 12px;
  fill: none;
  stroke: #000;
  stroke-width: 2;
}

.tasks-pick {
  flex: none;
  margin: 4px 0 5px;
}

.tasks-select {
  appearance: none;
  display: block;
  width: 100%;
  height: 23px;
  padding: 0 3px 0 2px;
  border: 1px solid #777;
  border-left: 0;
  border-radius: 0 5px 0 0;
  background: #fff url("data:image/svg+xml,%3Csvg xmlns='http://www.w3.org/2000/svg' width='24' height='23'%3E%3Cpath d='M0 0h1v23H0z' fill='%23999'/%3E%3Cpath d='M8 9h8l-4 4z'/%3E%3C/svg%3E") no-repeat right center;
}

.quick {
  flex: none;
  height: 57px;
  background: #fff;
  border: 1px solid #d6ecfa;
  border-left: 0;
  border-radius: 0 4px 4px 0;
}

.quick-row {
  display: flex;
  padding: 2px 0 0 10px;
}

.quick-cell {
  position: relative;
  width: 26px;
  height: 26px;
  padding: 2px 3px;
}

.quick-cell.active {
  border: 1px solid #3a6fc0;
  background: #f7c079;
  padding: 1px 2px;
}

.quick-cell b {
  position: absolute;
  left: 0;
  bottom: 0;
  width: 11px;
  height: 12px;
  background: #8fc0ff;
  font-weight: normal;
  font-size: 10px;
  line-height: 12px;
  text-align: center;
}

.quick-cell::after {
  content: "";
  position: absolute;
  right: 1px;
  bottom: 1px;
  border: 2px solid transparent;
  border-left: 3px solid #000;
  border-right: 0;
}

.quick-rest {
  display: block;
  width: 12px;
  height: 24px;
  fill: none;
}

.tasks-body {
  display: flex;
  flex: 1;
  min-height: 0;
  gap: 3px;
  margin: 5px 0 2px;
}

.palette {
  flex: 1;
  overflow: hidden;
  background: #fff;
  border-right: 1px solid #d6ecfa;
}

.task-tab {
  display: flex;
  align-items: center;
  justify-content: space-between;
  width: 100%;
  height: 22px;
  padding: 0 7px 0 3px;
  border: 1px solid #888;
  border-left: 0;
  border-radius: 0 4px 4px 0;
  background: linear-gradient(#f4f4f4, #c4c4c4);
  text-align: left;
}

.task-tab svg {
  width: 12px;
  height: 12px;
  fill: none;
}

.task-tab.open {
  gap: 5px;
  margin: 5px 0 3px;
  border: 0;
  background: linear-gradient(#e4f5fe, #a9dcf8);
}

.task-tab .picked {
  outline: 1px solid #aaa;
  background: #fff;
}

.icons {
  display: grid;
  grid-template-columns: repeat(7, 1fr);
  justify-items: center;
  align-items: center;
  grid-auto-rows: 26px;
  margin: 0 4px 0 -2px;
  padding-bottom: 1px;
  border-bottom: 1px solid #999;
}

.icons.last {
  border: 0;
}

.scrollbar {
  display: flex;
  flex-direction: column;
  width: 14px;
  align-items: center;
  justify-content: space-between;
}

.scrollbar svg {
  width: 12px;
  height: 16px;
  fill: none;
}

.thumb {
  width: 14px;
  flex: 1;
  margin-bottom: 72px;
  background: #cdcdcd;
}

/* drawing view */
.view {
  display: flex;
  flex-direction: column;
  flex: 1;
  min-width: 0;
  border-top: 1px solid #555;
  border-left: 1px solid #444;
  border-bottom: 1px solid #111;
  border-radius: 5px 0 0 0;
  background: #b9cfe8;
  box-shadow: inset 0 -1px #20c8dc;
  padding: 0 0 7px 6px;
}

.view-title {
  display: flex;
  align-items: center;
  flex: none;
  gap: 6px;
  height: 28px;
  margin-left: -6px;
  padding: 5px 0 0 8px;
  border-radius: 4px 0 0 0;
  background: linear-gradient(#9ab5d3, #bcd1ea);
  font-family: "Open Sans", sans-serif;
  font-size: 11px;
}

.view-icon {
  width: 13px;
  height: 13px;
  border: 3px solid #dde4ec;
  background: #444;
}

.view-tools {
  display: flex;
  align-items: center;
  flex: none;
  gap: 4px;
  height: 22px;
  padding-left: 2px;
  background: #f0f0f0;
}

.view-tools .ico {
  width: 17px;
  height: 17px;
}

.view-tools .caret {
  margin: 0 1px;
}

.view-tools .sep {
  height: 20px;
}

.view-tools .lit {
  width: 20px;
  height: 20px;
  border: 1px solid #2c5fb4;
  background: #ffd27a;
}

.canvas {
  flex: 1;
  min-height: 0;
  background: #20302f;
}

.plan {
  display: block;
  width: 100%;
  height: 100%;
}

.area-label {
  font-family: "Liberation Sans", sans-serif;
  font-size: 28px;
  fill: #f4f4f4;
}

/* floating windows */
.window {
  position: absolute;
  box-shadow: 0 3px 12px rgba(0, 0, 0, 0.45);
}

.fit {
  left: 314px;
  top: 85px;
  width: 188px;
  border: 1px solid #555;
  background: #f0f0f0;
}

.fit-title {
  display: flex;
  align-items: center;
  gap: 23px;
  height: 23px;
  background: #fff;
  color: #999;
  font-family: "Open Sans", sans-serif;
  font-size: 11px;
}

.fit-title span {
  margin-left: -21px;
  margin-right: -20px;
  white-space: nowrap;
}

.fit-title .ico:last-child {
  margin-right: 11px;
}

.fit-body {
  display: flex;
  align-items: center;
  gap: 6px;
  height: 32px;
  padding: 0 32px 6px 28px;
}

.fit-body .field {
  flex: 1;
  height: 14px;
}

.gcadas {
  left: 520px;
  right: -24px;
  top: 78px;
  border: 1px solid #888;
  font-family: "Noto Sans", sans-serif;
  font-size: 11px;
}

.gcadas-title {
  display: flex;
  align-items: center;
  gap: 22px;
  height: 27px;
  padding: 0 22px 0 5px;
  background: #fff;
  color: #999;
}

.gcadas-title span {
  margin-left: -20px;
}

.gcadas-menu {
  display: flex;
  align-items: center;
  height: 23px;
  padding-left: 3px;
  background: #bfdbff;
  white-space: nowrap;
}

.gcadas-menu a {
  padding: 2px 6px;
  line-height: 15px;
}

.gcadas-menu .marked {
  padding: 1px 4px;
  border: 3px solid #ed1c24;
}

.gcadas-menu .hot {
  padding: 1px 5px;
  border: 1px solid #f5b45c;
  background: linear-gradient(#ffeab4, #ffd272);
}

.gcadas-body {
  height: 46px;
  background: #e3efff;
}

.gcadas-tools {
  display: flex;
  align-items: center;
  gap: 10px;
  height: 24px;
  padding-left: 7px;
  background: #bfdbff;
}

.gcadas-tools .sep {
  height: 16px;
  margin: 0 -2px;
  background: #fff;
}

/* frame dialog */
.dialog {
  left: 761px;
  top: 154px;
  width: 352px;
  border: 1px solid #1f80d0;
  background: #e3efff;
}

.dialog-title {
  display: flex;
  align-items: center;
  height: 28px;
  padding: 0 5px 0 8px;
  background: #fff;
  font-family: "Open Sans", sans-serif;
  font-size: 11px;
}

.dialog-body {
  padding: 9px 8px 8px;
}

.fields {
  display: grid;
  grid-template-columns: 91px 1fr;
  grid-auto-rows: 18px;
  row-gap: 7px;
  align-items: center;
  padding: 7px 8px 8px 7px;
  border: 1px solid #84a9dc;
}

.fields label {
  white-space: nowrap;
  line-height: 18px;
}

.split {
  display: flex;
  justify-content: space-between;
  padding-right: 3px;
}

.control {
  position: relative;
}

.control input,
.control select {
  appearance: none;
  display: block;
  width: 100%;
  height: 18px;
  padding: 0 1px;
  border: 1px solid #a9c6ea;
  border-radius: 0;
  background-color: #fff;
  outline: 0;
}

.control select {
  background-image: url("data:image/svg+xml,%3Csvg xmlns='http://www.w3.org/2000/svg' width='6' height='3'%3E%3Cpath d='M0 0h6L3 3z' fill='%234a74ac'/%3E%3C/svg%3E");
  background-repeat: no-repeat;
  background-position: right 4px center;
}

.two {
  display: grid;
  grid-template-columns: 66px 1fr;
  gap: 6px;
}

.dots {
  position: absolute;
  right: 4px;
  top: 0;
  color: #4a74ac;
  font-family: "Noto Sans", sans-serif;
  font-size: 14px;
  font-style: normal;
  font-weight: bold;
  line-height: 18px;
}

/* red call-outs around the steps to follow */
.mark {
  position: absolute;
  inset: -3px;
  border: 3px solid #ed1c24;
  pointer-events: none;
}

.mark.short {
  right: 7px;
}

.mark.level-mark {
  right: 160px;
}

.mark.kind-mark {
  inset: -1px 82px -1px -2px;
}

.mark.tight {
  inset: -2px;
}

.fields .tick {
  grid-column: 2;
  display: flex;
  align-items: center;
  gap: 4px;
}

.tick input {
  appearance: none;
  width: 11px;
  height: 11px;
  border: 1px solid #a0b4cc;
  background: #eee;
  outline: 1px solid #fff;
}

.corners {
  margin-top: 6px;
  padding-bottom: 7px;
  border: 1px solid #84a9dc;
}

.corners h2 {
  margin: 0 0 6px;
  padding-left: 10px;
  border-bottom: 1px solid #84a9dc;
  background: linear-gradient(#e3efff, #b4d2fc);
  color: #1c3f94;
  font-size: 10px;
  font-weight: normal;
  line-height: 18px;
}

.corner {
  display: grid;
  grid-template-columns: 55px 1fr;
  align-items: center;
  padding: 0 8px 0 6px;
}

.corner + .corner {
  margin-top: 7px;
}

.corner label {
  white-space: nowrap;
}

.corner input {
  background: #e3efff;
}

.actions {
  display: grid;
  grid-template-columns: 105px 1fr 1fr 1fr;
  gap: 6px;
  margin-top: 7px;
}

.actions button {
  width: 100%;
  height: 21px;
  padding: 0;
  border: 1px solid #7f9fcb;
  border-radius: 2px;
  background: linear-gradient(#eaf2fd 45%, #cbdef6 50%, #e3eefc);
}

/* bottom toolbar */
.toolrow.bottom {
  height: 33px;
  gap: 1px;
  border-bottom: 1px solid #bbb;
}

.view-groups {
  width: 371px;
  gap: 6px;
}

.model-views {
  display: flex;
  align-items: center;
  width: 121px;
  padding-left: 2px;
  border: 1px solid #999;
  background: #e1e1e1;
}

.model-views .ico {
  width: 15px;
  height: 15px;
}

.model-views .field {
  flex: 1;
  height: 18px;
  padding-left: 5px;
  border: 0;
}

.view-groups .caret,
.view-groups .sep {
  margin: 0 -1px;
}

.numbers {
  display: flex;
}

.numbers button {
  width: 13px;
  height: 19px;
  padding: 0;
  border: 1px solid #fff;
  border-right-color: #444;
  border-bottom-color: #999;
  background: #e6e6e6;
}

.numbers .on {
  border-color: #888;
  background: #ffd27a;
}

.coords {
  gap: 8px;
  width: 342px;
  padding: 0 15px 0 3px;
}

.coords .grip {
  margin-right: 5px;
}

.coords label {
  font-family: "Liberation Sans", sans-serif;
  font-size: 15px;
  font-weight: bold;
}

.coords input {
  flex: 1;
  min-width: 0;
  height: 17px;
  padding: 0 4px;
  border: 1px solid #aaa;
  background: #fff;
  color: #777;
}

/* status bar */
.status {
  display: flex;
  flex: none;
  height: 18px;
  line-height: 22px;
}

.status-prompt {
  width: 351px;
  border-right: 2px solid #aaa;
}

.status-msg {
  position: relative;
  flex: 1;
  padding-left: 26px;
}

.up {
  position: absolute;
  left: 18px;
  top: 2px;
  border: 3px solid transparent;
  border-bottom-color: #000;
  border-top: 0;
}

.cell {
  width: 26px;
  padding-left: 2px;
  border-left: 1px solid #999;
  border-top: 1px solid #bbb;
}

.cell:last-child {
  width: 22px;
}

.level-cell {
  width: 109px;
}

.cell.wide {
  width: 99px;
}
```
